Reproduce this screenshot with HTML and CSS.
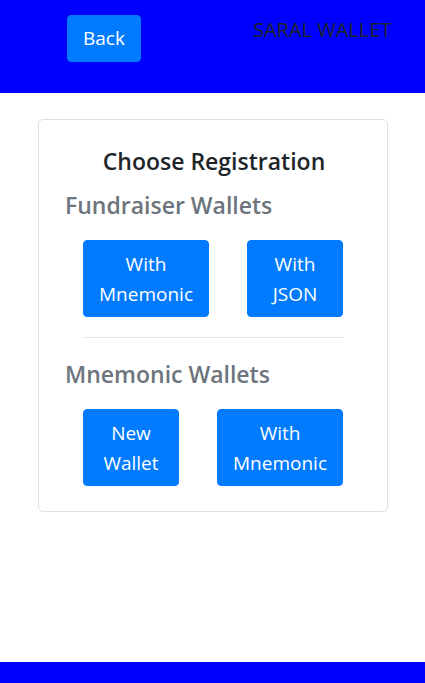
FILE: index.html
```html
<!DOCTYPE html>
<html>
<head>
<meta charset="utf-8">
<link rel="stylesheet" href="styles.css">
</head>
<body>
<div class="page">
  <header class="topbar">
    <button class="btn back">Back</button>
    <div class="brand">SARAL WALLET</div>
  </header>
  <main class="content">
    <div class="card">
      <h3 class="title">Choose Registration</h3>
      <h4 class="section">Fundraiser Wallets</h4>
      <div class="row">
        <button class="btn">With<br>Mnemonic</button>
        <button class="btn">With<br>JSON</button>
      </div>
      <hr class="divider">
      <h4 class="section">Mnemonic Wallets</h4>
      <div class="row">
        <button class="btn">New<br>Wallet</button>
        <button class="btn">With<br>Mnemonic</button>
      </div>
    </div>
  </main>
  <footer class="bottombar"></footer>
</div>
</body>
</html>
```
FILE: styles.css
```css
* { box-sizing: border-box; }
html, body { margin: 0; padding: 0; }
body {
  font-family: "Open Sans", "Noto Sans", sans-serif;
  color: #212529;
  background: #fff;
}
.page {
  height: 683px;
  display: flex;
  flex-direction: column;
}
.topbar {
  height: 93px;
  background: #0000ff;
  display: flex;
  align-items: flex-start;
  padding: 15px 0 0 67px;
}
.brand {
  margin-left: 112px;
  margin-top: 3px;
  font-size: 20px;
  line-height: 24px;
  color: #212529;
}
.btn {
  font-family: inherit;
  font-size: 19px;
  line-height: 30px;
  min-width: 96px;
  padding: 8px 15px 7px;
  border: 1px solid #007bff;
  background: #007bff;
  color: #fff;
  border-radius: 4px;
  text-align: center;
}
.back {
  min-width: 0;
  padding: 7px 15px 8px;
}
.content {
  flex: 1;
  padding: 26px 37px 0 38px;
}
.card {
  border: 1px solid #dfdfdf;
  border-radius: 5px;
  padding: 26px 44px 25px 26px;
}
.title {
  margin: 0 0 15px;
  text-align: center;
  font-size: 23px;
  font-weight: 600;
  line-height: 30px;
  padding-left: 20px;
  color: #212529;
}
.section {
  margin: 0 0 21px;
  font-size: 23px;
  font-weight: 600;
  line-height: 28px;
  color: #6c757d;
}
.row {
  display: flex;
  justify-content: space-between;
  margin-left: 18px;
}
.divider {
  border: 0;
  border-top: 1px solid #e5e5e5;
  margin: 20px 0 22px 18px;
}
.bottombar {
  height: 21px;
  background: #0000ff;
}
```
